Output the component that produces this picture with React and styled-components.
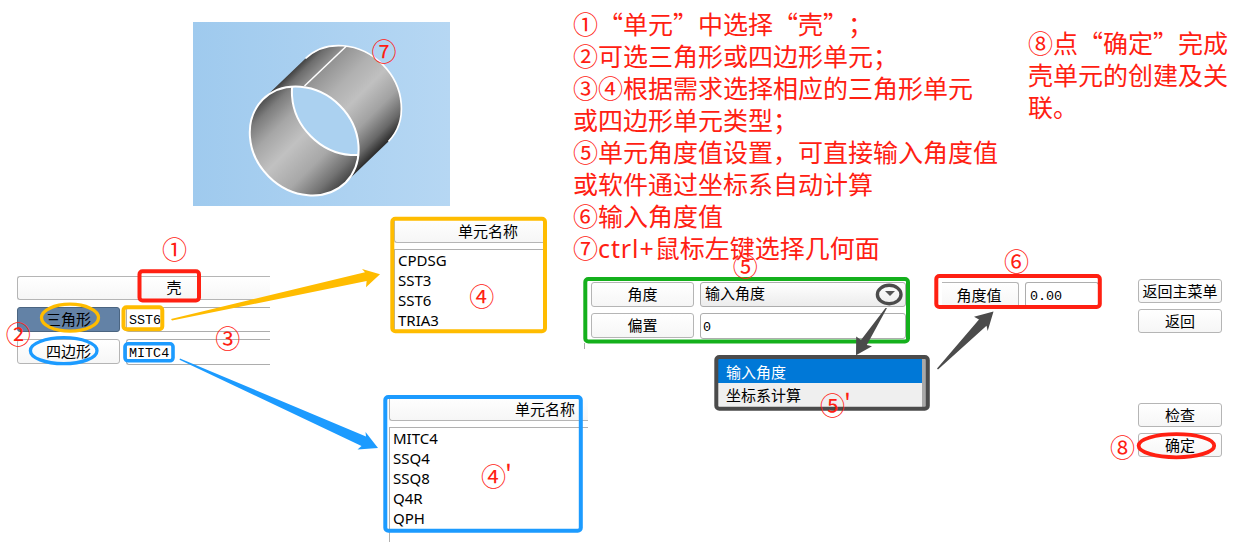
import React from "react";
import styled, { createGlobalStyle } from "styled-components";

const Global = createGlobalStyle`
  * { box-sizing: border-box; }
  body { margin: 0; background: #fff; }
`;

const RED = "#ff2012";
const AMBER = "#ffbc00";
const BLUE = "#1c9bff";
const GREEN = "#14b01c";
const DARK = "#4b4b4b";

const Page = styled.main`
  position: relative;
  display: flex;
  width: 1239px;
  height: 553px;
  overflow: hidden;
  color: #000;
  font: 15px/20px "Noto Sans CJK SC", sans-serif;
  text-spacing-trim: space-all;
  white-space: nowrap;
`;

const LeftSide = styled.section`
  width: 573px;
  flex: none;
`;

const RightSide = styled.section`
  flex: 1;
`;

const Viewport = styled.figure`
  width: 257px;
  height: 184px;
  margin: 22px 0 0 193px;
  background: linear-gradient(90deg, #9fcaee, #b6d7f3);
  svg { display: block; }
`;

const ElementArea = styled.div`
  display: flex;
  justify-content: space-between;
  align-items: flex-start;
  padding-left: 17px;
`;

const ElementForm = styled.div`
  width: 253px;
  margin-top: 70px;
  display: grid;
  grid-template-columns: 103px 144px;
  grid-template-rows: 24px 25px 25px;
  column-gap: 6px;
  row-gap: 7px;
`;

const Button = styled.div`
  display: flex;
  align-items: center;
  justify-content: center;
  height: ${(p) => p.$h || 24}px;
  padding-bottom: 1px;
  border: 1px solid ${(p) => (p.$active ? "#4b6581" : "#b5b5b5")};
  border-radius: 3px;
  background: ${(p) => (p.$active ? "#6382a6" : "linear-gradient(#fff, #f6f6f6)")};
`;

const WideButton = styled(Button)`
  grid-column: 1 / -1;
  border-right: 0;
  border-radius: 3px 0 0 3px;
  padding: 0 0 2px 60px;
`;

const Field = styled.div`
  display: flex;
  align-items: center;
  height: ${(p) => p.$h || 26}px;
  padding: 3px 0 0 2px;
  border: 1px solid #adadad;
  border-right-width: ${(p) => (p.$open ? 0 : 1)}px;
  border-radius: ${(p) => (p.$open ? "3px 0 0 3px" : "3px")};
  font-family: "Liberation Mono", "Noto Sans CJK SC", monospace;
  font-size: 13.4px;
`;

const Lists = styled.div`
  display: flex;
  flex-direction: column;
  width: 184px;
  padding-top: 13px;
`;

const ListPanel = styled.div`
  width: ${(p) => p.$w}px;
  height: ${(p) => p.$h}px;
  margin: ${(p) => p.$m};
`;

const ListHeader = styled.div`
  height: 24px;
  padding: 2px 0 0 ${(p) => p.$indent}px;
  border: 1px solid #b5b5b5;
  border-width: 0 0 1px 1px;
  border-radius: 0 0 0 3px;
  background: linear-gradient(#fff, #f6f6f6);
  line-height: 20px;
`;

const ItemList = styled.ul`
  list-style: none;
  margin: 6px 0 0;
  padding: 0 0 0 3px;
  height: ${(p) => p.$h}px;
  border: 1px solid #b0b0b0;
  border-width: 1px 0 0 1px;
  font: 15px/20px "Noto Sans", sans-serif;
`;

const NotesRow = styled.div`
  display: flex;
  height: 281px;
  color: ${RED};
  font-size: 25px;
  font-weight: 400;
  line-height: 32px;
`;

const Notes = styled.div`
  width: 455px;
  padding-top: 7px;
`;

const SideNote = styled.div`
  padding-top: 26px;
`;

const Latin = styled.span`
  font-family: "Noto Sans", sans-serif;
  font-size: 25px;
  line-height: 20px;
  letter-spacing: 0.9px;
`;

const Controls = styled.div`
  display: flex;
  align-items: flex-start;
`;

const SettingsColumn = styled.div`
  width: 356px;
  padding-left: 11px;
`;

const Settings = styled.div`
  display: grid;
  grid-template-columns: 103px 206px;
  gap: 6px;
  height: 67px;
  margin-left: 7px;
  align-content: start;
  padding-top: 1px;
`;

const PanelEdge = styled.div`
  width: 1px;
  height: 6px;
  margin-top: -5px;
  background: #aaa;
`;

const Select = styled(Field)`
  justify-content: space-between;
  padding: 0 8px 3px 4px;
  background: linear-gradient(#fff, #ececec);
  font: 15px/20px "Noto Sans CJK SC", sans-serif;
`;

const Caret = styled.i`
  border: 5px solid transparent;
  border-top-color: #555;
  margin: 6px 2px 0 0;
`;

const Menu = styled.div`
  width: 208px;
  height: 49px;
  margin: 10px 0 0 134px;
  border-right: 4px solid #a8a8a8;
  background: #efefef;
`;

const Option = styled.div`
  height: ${(p) => (p.$selected ? 24 : 25)}px;
  padding-left: 8px;
  line-height: ${(p) => (p.$selected ? 25 : 23)}px;
  color: ${(p) => (p.$selected ? "#fff" : "#000")};
  background: ${(p) => (p.$selected ? "#0078d7" : "#efefef")};
`;

const AngleRow = styled.div`
  display: flex;
  gap: 6px;
  width: 209px;
  padding: 1px 0 0 13px;
`;

const AngleLabel = styled(Button)`
  width: 77px;
  height: 25px;
  padding-right: 2px;
  border-width: 1px 1px 0 0;
  border-radius: 0 3px 0 0;
`;

const AngleField = styled(Field)`
  width: 74px;
  padding-left: 4px;
  border-bottom: 0;
`;

const Actions = styled.div`
  display: flex;
  flex-direction: column;
  gap: 6px;
  width: 84px;
  margin-top: -2px;
`;

const ActionGap = styled.div`
  height: 58px;
`;

const Overlay = styled.svg`
  position: absolute;
  inset: 0;
  fill: none;
  pointer-events: none;
`;

const Badge = styled.span`
  position: absolute;
  left: ${(p) => p.$x - 12.5}px;
  top: ${(p) => p.$y - 17}px;
  color: ${RED};
  font-size: 25px;
  font-weight: 400;
  line-height: 32px;
`;

const Prime = styled.span`
  position: relative;
  top: -3px;
  margin-left: -1px;
`;

const outlines = [
  [139.5, 271.3, 59.5, 29.2, RED, 4],
  [123.5, 307.2, 38.8, 22, AMBER, 4],
  [125, 343.8, 48, 17, BLUE, 3.6],
  [392.3, 218.7, 152.7, 112.6, AMBER, 4],
  [385.3, 397, 195.5, 133.7, BLUE, 4],
  [585.3, 279, 322.7, 62.5, GREEN, 4],
  [716.3, 357, 211.5, 51.7, DARK, 4],
  [936.3, 276, 163.5, 31, RED, 4],
];

const rings = [
  [70, 317.7, 28.5, 13.5, AMBER, 3.3],
  [63.7, 350.7, 33.3, 13, BLUE, 3.3],
  [889.2, 294.5, 11.8, 9.2, DARK, 3.4],
  [1176.4, 445.7, 37.8, 11.6, RED, 3.8],
];

const arrows = [
  ["M171 319 L365 272.3 L362 269 L380 274.3 L366 287.3 L366.6 281 L172 320.6Z", AMBER],
  ["M180 358.5 L366 436.5 L365.5 432 L378 448 L357.5 449.5 L361.5 446 L179.5 359.8Z", BLUE],
  ["M887 308 L866.8 345 L872 346.3 L856 355.2 L856.2 336.5 L861 340 L885.5 308Z", DARK],
  ["M937 368.5 L979 319.5 L974 316.8 L993.5 311.5 L987.7 331 L986.5 325.8 L938 369.5Z", DARK],
];

const badges = [
  [384, 51, "⑦"], [174.5, 249, "①"], [18.3, 334, "②"], [227.8, 338.3, "③"],
  [481.7, 296, "④"], [493.5, 475.8, "④", true], [745.3, 266, "⑤"], [1016.5, 261, "⑥"],
  [832.5, 404.5, "⑤", true], [1122.5, 447, "⑧"],
];

function Cylinder() {
  const front = "M69.7 77.5 A58.7 51.2 45 0 1 152.7 160.5 A58.7 51.2 45 0 1 69.7 77.5Z";
  return (
    <svg width="257" height="184" fill="none">
      <defs>
        <linearGradient id="outer" gradientUnits="userSpaceOnUse" x1="70" y1="77" x2="153" y2="160">
          <stop offset="0" stopColor="#3b3b3b" />
          <stop offset=".07" stopColor="#6d6d6d" />
          <stop offset=".18" stopColor="#929292" />
          <stop offset=".38" stopColor="#b0b0b0" />
          <stop offset=".56" stopColor="#c0c0c0" />
          <stop offset=".75" stopColor="#a2a2a2" />
          <stop offset=".91" stopColor="#686868" />
          <stop offset="1" stopColor="#303030" />
        </linearGradient>
        <linearGradient id="inner" gradientUnits="userSpaceOnUse" x1="70" y1="77" x2="153" y2="160">
          <stop offset="0" stopColor="#4c4c4c" />
          <stop offset=".1" stopColor="#7c7c7c" />
          <stop offset=".26" stopColor="#a6a6a6" />
          <stop offset=".46" stopColor="#c1c1c1" />
          <stop offset=".7" stopColor="#a8a8a8" />
          <stop offset=".88" stopColor="#747474" />
          <stop offset="1" stopColor="#444" />
        </linearGradient>
        <clipPath id="mouth"><path d={front} /></clipPath>
      </defs>
      <path d="M69.7 77.5 L112.5 36.5 A58.7 51.2 45 0 1 195.5 119.5 L152.7 160.5Z" fill="url(#outer)" />
      <path d={front} fill="url(#inner)" />
      <g clipPath="url(#mouth)">
        <ellipse
          rx="58.7" ry="51.2" transform="translate(154 78) rotate(45)"
          fill="#abd1f0" stroke="#fff" strokeWidth="2"
        />
      </g>
      <path d="M112.5 36.5 A58.7 51.2 45 0 1 195.5 119.5" stroke="#fff" strokeWidth="1.7" />
      <path d="M153.5 24 L111.5 64" stroke="#fff" strokeWidth="1.5" />
      <path d={front} stroke="#fff" strokeWidth="2" />
    </svg>
  );
}

export default function App() {
  return (
    <>
      <Global />
      <Page>
        <LeftSide>
          <Viewport><Cylinder /></Viewport>
          <ElementArea>
            <ElementForm>
              <WideButton>壳</WideButton>
              <Button $active $h={25}>三角形</Button>
              <Field $open $h={25}>SST6</Field>
              <Button $h={25}>四边形</Button>
              <Field $open $h={26}>MITC4</Field>
            </ElementForm>
            <Lists>
              <ListPanel $w={149} $h={113} $m="0 0 0 5px">
                <ListHeader $indent={63}>单元名称</ListHeader>
                <ItemList $h={82}>
                  <li>CPDSG</li><li>SST3</li><li>SST6</li><li>TRIA3</li>
                </ItemList>
              </ListPanel>
              <ListPanel $w={199} $h={145} $m="65px 0 0">
                <ListHeader $indent={125}>单元名称</ListHeader>
                <ItemList $h={115}>
                  <li>MITC4</li><li>SSQ4</li><li>SSQ8</li><li>Q4R</li><li>QPH</li>
                </ItemList>
              </ListPanel>
            </Lists>
          </ElementArea>
        </LeftSide>

        <RightSide>
          <NotesRow>
            <Notes>
              ①“单元”中选择“壳”；<br />
              ②可选三角形或四边形单元；<br />
              ③④根据需求选择相应的三角形单元<br />
              或四边形单元类型；<br />
              ⑤单元角度值设置，可直接输入角度值<br />
              或软件通过坐标系自动计算<br />
              ⑥输入角度值<br />
              ⑦<Latin>ctrl+</Latin>鼠标左键选择几何面
            </Notes>
            <SideNote>
              ⑧点“确定”完成<br />
              壳单元的创建及关<br />
              联。
            </SideNote>
          </NotesRow>
          <Controls>
            <SettingsColumn>
              <Settings>
                <Button $h={25}>角度</Button>
                <Select $h={25}>输入角度<Caret /></Select>
                <Button $h={25}>偏置</Button>
                <Field $h={26}>0</Field>
              </Settings>
              <PanelEdge />
              <Menu>
                <Option $selected>输入角度</Option>
                <Option>坐标系计算</Option>
              </Menu>
            </SettingsColumn>
            <AngleRow>
              <AngleLabel>角度值</AngleLabel>
              <AngleField $h={25}>0.00</AngleField>
            </AngleRow>
            <Actions>
              <Button>返回主菜单</Button>
              <Button>返回</Button>
              <ActionGap />
              <Button>检查</Button>
              <Button>确定</Button>
            </Actions>
          </Controls>
        </RightSide>

        <Overlay width="1239" height="553">
          {outlines.map(([x, y, w, h, c, s]) => (
            <rect key={x} x={x} y={y} width={w} height={h} rx="3" stroke={c} strokeWidth={s} />
          ))}
          {rings.map(([cx, cy, rx, ry, c, s]) => (
            <ellipse key={cx} cx={cx} cy={cy} rx={rx} ry={ry} stroke={c} strokeWidth={s} />
          ))}
          {arrows.map(([d, c]) => <path key={d} d={d} fill={c} />)}
        </Overlay>
        {badges.map(([x, y, t, prime]) => (
          <Badge key={x} $x={x} $y={y}>{t}{prime && <Prime>'</Prime>}</Badge>
        ))}
      </Page>
    </>
  );
}
